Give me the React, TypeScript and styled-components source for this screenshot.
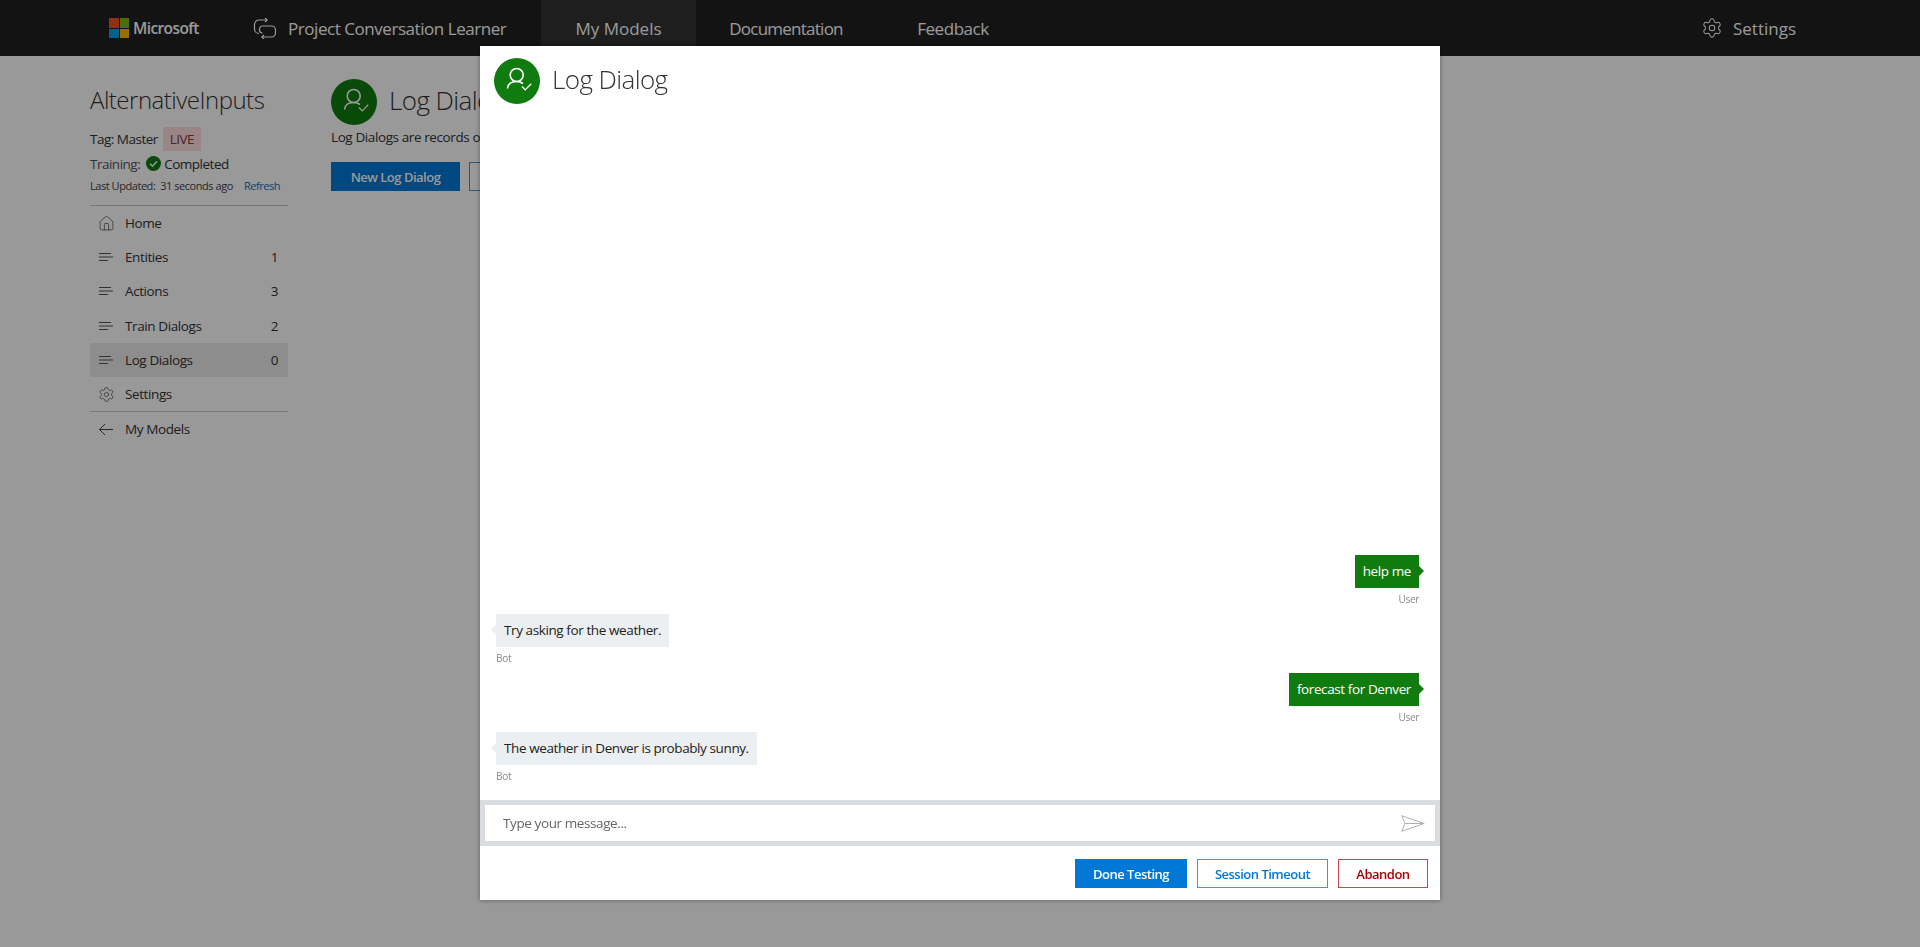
import React from 'react';
import styled, { createGlobalStyle } from 'styled-components';
import { Home, Settings } from 'lucide-react';

const GlobalStyle = createGlobalStyle`
  html, body {
    margin: 0;
    height: 100%;
    background: #fff;
    overflow: hidden;
  }
  body {
    font-family: "Open Sans", "Noto Sans", sans-serif;
    color: #333;
  }
  * { box-sizing: border-box; }
`;

const Page = styled.div`
  width: 1920px;
  height: 947px;
  display: flex;
  flex-direction: column;
`;

/* top navigation */
const TopBar = styled.header`
  height: 56px;
  background: #212121;
  display: flex;
  align-items: stretch;
  padding-left: 109px;
  padding-right: 124px;
  flex-shrink: 0;
`;

const LogoBlock = styled.div`
  display: flex;
  align-items: center;
  gap: 4px;
  width: 144px;
`;

const LogoGrid = styled.div`
  width: 20px;
  height: 20px;
  display: grid;
  grid-template-columns: 1fr 1fr;
  grid-template-rows: 1fr 1fr;
  gap: 1px;
`;

const LogoCell = styled.span<{ $color: string }>`
  background: ${({ $color }) => $color};
`;

const LogoText = styled.span`
  color: #fff;
  font-size: 15.5px;
  font-weight: 600;
  letter-spacing: -0.6px;
`;

const ProductBlock = styled.div`
  display: flex;
  align-items: center;
  gap: 11px;
  color: #fff;
  font-size: 17px;
  letter-spacing: -0.45px;
  width: 288px;
`;

const NavTab = styled.div<{ $active?: boolean; $width: number; $tracking: number }>`
  display: flex;
  align-items: center;
  justify-content: center;
  width: ${({ $width }) => $width}px;
  font-size: 17px;
  letter-spacing: ${({ $tracking }) => $tracking}px;
  color: #fff;
  background: ${({ $active }) => ($active ? '#333' : 'transparent')};
`;

const NavSpacer = styled.div`
  flex: 1;
`;

const NavSettings = styled.div`
  display: flex;
  align-items: center;
  gap: 10px;
  color: #fff;
  font-size: 17px;
`;

/* page behind the dialog */
const Body = styled.div`
  display: flex;
  flex: 1;
  padding-left: 90px;
`;

const Sidebar = styled.aside`
  width: 198px;
  padding-top: 29px;
  flex-shrink: 0;
`;

const AppTitle = styled.div`
  font-size: 24px;
  font-weight: 300;
  line-height: 30px;
  letter-spacing: -0.5px;
  margin-bottom: 12px;
`;

const TagRow = styled.div`
  display: flex;
  align-items: center;
  font-size: 13.5px;
  letter-spacing: -0.5px;
  height: 24px;
  gap: 5px;
`;

const LiveBadge = styled.span`
  background: #ffdede;
  color: #804040;
  width: 38px;
  height: 24px;
  line-height: 24px;
  text-align: center;
`;

const TrainingRow = styled.div`
  display: flex;
  align-items: center;
  font-size: 13.5px;
  letter-spacing: -0.5px;
  height: 25px;
  gap: 6px;
  color: #555;
`;

const TrainingValue = styled.span`
  display: flex;
  align-items: center;
  gap: 3px;
  color: #333;
`;

const UpdatedRow = styled.div`
  display: flex;
  align-items: center;
  font-size: 11px;
  letter-spacing: -0.45px;
  height: 18px;
  color: #444;
  white-space: nowrap;
`;

const RefreshLink = styled.span`
  color: #106ebe;
  margin-left: 11px;
`;

const SideRule = styled.div<{ $top?: number }>`
  height: 1px;
  margin-top: ${({ $top }) => $top || 0}px;
  background: #c8c8c8;
`;

const SideNav = styled.nav`
  display: flex;
  flex-direction: column;
`;

const SideItem = styled.div<{ $selected?: boolean }>`
  height: 34.2px;
  display: flex;
  align-items: center;
  padding: 0 10px 0 8px;
  font-size: 13.5px;
  letter-spacing: -0.4px;
  color: #333;
  background: ${({ $selected }) => ($selected ? '#ececec' : 'transparent')};
`;

const SideIcon = styled.span`
  width: 27px;
  display: flex;
  align-items: center;
`;

const SideLabel = styled.span`
  flex: 1;
`;

const Main = styled.main`
  margin-left: 43px;
  padding-top: 23px;
  flex: 1;
`;

const Heading = styled.div`
  display: flex;
  align-items: center;
  gap: 12px;
  font-size: 26px;
  font-weight: 300;
  letter-spacing: -0.6px;
  color: #333;
  flex-shrink: 0;
`;

const HeadingText = styled.span`
  padding-bottom: 5px;
`;

const DialogHeading = styled(Heading)`
  padding: 12px 14px 0;
`;

const Description = styled.div`
  font-size: 13.5px;
  letter-spacing: -0.4px;
  margin-top: 2px;
  height: 35px;
  line-height: 20px;
`;

const ButtonRow = styled.div<{ $align?: string; $gap: number }>`
  display: flex;
  gap: ${({ $gap }) => $gap}px;
  justify-content: ${({ $align }) => $align || 'flex-start'};
`;

const ActionButton = styled.button<{ $tone: 'primary' | 'outline' | 'danger'; $width: number }>`
  width: ${({ $width }) => $width}px;
  height: 29px;
  padding: 0;
  font-family: inherit;
  font-size: 13px;
  font-weight: 600;
  letter-spacing: -0.5px;
  border: 1px solid ${({ $tone }) => ($tone === 'danger' ? '#c8474d' : $tone === 'outline' ? '#3f96df' : '#0078d7')};
  background: ${({ $tone }) => ($tone === 'primary' ? '#0078d7' : '#fff')};
  color: ${({ $tone }) => ($tone === 'primary' ? '#fff' : $tone === 'danger' ? '#a80000' : '#0078d7')};
`;

/* dialog */
const Overlay = styled.div`
  position: fixed;
  inset: 0;
  background: rgba(0, 0, 0, 0.4);
  padding: 46px 0 0 480px;
`;

const Dialog = styled.div`
  width: 960px;
  height: 854px;
  background: #fff;
  box-shadow: 0 0 5px rgba(0, 0, 0, 0.4);
  display: flex;
  flex-direction: column;
`;

const Badge = styled.span`
  width: 46px;
  height: 46px;
  border-radius: 50%;
  background: #107c10;
  display: flex;
  flex-shrink: 0;
`;

const ChatArea = styled.div`
  flex: 1;
  display: flex;
  flex-direction: column;
  justify-content: flex-end;
  padding: 0 21px 17px 16px;
  gap: 8px;
`;

const Message = styled.div<{ $mine?: boolean }>`
  display: flex;
  flex-direction: column;
  align-items: ${({ $mine }) => ($mine ? 'flex-end' : 'flex-start')};
`;

const Bubble = styled.div<{ $mine?: boolean }>`
  position: relative;
  height: 33px;
  line-height: 32px;
  padding: 0 8px;
  font-size: 13.5px;
  letter-spacing: -0.4px;
  background: ${({ $mine }) => ($mine ? '#107c10' : '#eceff1')};
  color: ${({ $mine }) => ($mine ? '#fff' : '#222')};

  &::after {
    content: '';
    position: absolute;
    top: 11px;
    ${({ $mine }) => ($mine ? 'right: -5px;' : 'left: -5px;')}
    border-top: 5px solid transparent;
    border-bottom: 5px solid transparent;
    ${({ $mine }) => ($mine ? 'border-left: 5px solid #107c10;' : 'border-right: 5px solid #eceff1;')}
  }
`;

const Sender = styled.div`
  font-size: 10px;
  letter-spacing: -0.3px;
  color: #8a8a8a;
  height: 14px;
  line-height: 14px;
  margin-top: 4px;
`;

const InputBand = styled.div`
  height: 46px;
  background: #dadde0;
  padding: 5px;
  flex-shrink: 0;
`;

const InputBox = styled.div`
  height: 36px;
  background: #fff;
  display: flex;
  align-items: center;
  justify-content: space-between;
  padding: 0 10px 0 18px;
  font-size: 13.5px;
  letter-spacing: -0.4px;
  color: #666;
`;

const DialogFooter = styled.div`
  padding: 13px 12px 12px 0;
  flex-shrink: 0;
`;

const ThreeLines = () => (
  <svg width="16" height="10" viewBox="0 0 16 10" fill="none" stroke="#555" strokeWidth="1">
    <path d="M1 1.5h12M1 5h14M1 8.500h9" />
  </svg>
);

const PersonCheck = () => (
  <svg width="46" height="46" viewBox="0 0 46 46" fill="none" stroke="#fff" strokeWidth="1.6">
    <circle cx="22.700" cy="17" r="6.500" />
    <path d="M13.500 30.500C14 26 17.500 23.500 22.500 23.500c2.500 0 4.500.5 6.500 2" />
    <path d="M28 28.500l3.200 3.400 6-6.200" strokeWidth="1.300" />
  </svg>
);

const ChatLoop = () => (
  <svg width="24" height="21" viewBox="0 0 24 21" fill="none" stroke="#fff" strokeWidth="1.2">
    <path d="M14 2H6A4.500 4.500 0 0 0 1.500 6.500v4.500A4.500 4.500 0 0 0 6 15.500" />
    <path d="M12 0l2.200 2-2.200 2" />
    <path d="M9 19h9.500a4 4 0 0 0 4-4v-3a4 4 0 0 0-4-4h-9a3 3 0 0 0-3 3v1a3 3 0 0 0 3 3" />
    <path d="M11 17l-2.200 2 2.200 2" />
  </svg>
);

const SendPlane = () => (
  <svg width="24" height="17" viewBox="0 0 24 17" fill="none" stroke="#b0b0b0" strokeWidth="1">
    <path d="M.700.700l22.500 7.800-22.500 7.800 3.300-7.800z" />
    <path d="M4 8.500h19" />
  </svg>
);

const BackArrow = () => (
  <svg width="16" height="13" viewBox="0 0 16 13" fill="none" stroke="#444" strokeWidth="1">
    <path d="M15 6.500H1.500M7 1L1.500 6.500 7 12" />
  </svg>
);

const CompletedMark = () => (
  <svg width="15" height="15" viewBox="0 0 15 15">
    <circle cx="7.500" cy="7.500" r="7.500" fill="#107c10" />
    <path d="M4 7.800l2.500 2.400L11 5.300" fill="none" stroke="#fff" strokeWidth="1.500" />
  </svg>
);

const sideItems = [
  { label: 'Entities', count: 1 },
  { label: 'Actions', count: 3 },
  { label: 'Train Dialogs', count: 2 },
  { label: 'Log Dialogs', count: 0, selected: true },
];

const messages = [
  { text: 'help me', mine: true },
  { text: 'Try asking for the weather.' },
  { text: 'forecast for Denver', mine: true },
  { text: 'The weather in Denver is probably sunny.' },
];

const App: React.FC = () => {
  return (
    <>
      <GlobalStyle />
      <Page>
        <TopBar>
          <LogoBlock>
            <LogoGrid>
              <LogoCell $color="#f25022" />
              <LogoCell $color="#7fba00" />
              <LogoCell $color="#00a4ef" />
              <LogoCell $color="#ffb900" />
            </LogoGrid>
            <LogoText>Microsoft</LogoText>
          </LogoBlock>
          <ProductBlock>
            <ChatLoop />
            Project Conversation Learner
          </ProductBlock>
          <NavTab $active $width={155} $tracking={0}>My Models</NavTab>
          <NavTab $width={180} $tracking={-0.75}>Documentation</NavTab>
          <NavTab $width={154} $tracking={-0.45}>Feedback</NavTab>
          <NavSpacer />
          <NavSettings>
            <Settings size={22} strokeWidth={1.1} color="#fff" />
            Settings
          </NavSettings>
        </TopBar>
        <Body>
          <Sidebar>
            <AppTitle>AlternativeInputs</AppTitle>
            <TagRow>
              Tag: Master
              <LiveBadge>LIVE</LiveBadge>
            </TagRow>
            <TrainingRow>
              Training:
              <TrainingValue>
                <CompletedMark />
                Completed
              </TrainingValue>
            </TrainingRow>
            <UpdatedRow>
              Last Updated:&nbsp; 31 seconds ago
              <RefreshLink>Refresh</RefreshLink>
            </UpdatedRow>
            <SideRule $top={11} />
            <SideNav>
              <SideItem>
                <SideIcon><Home size={17} strokeWidth={1} color="#444" /></SideIcon>
                <SideLabel>Home</SideLabel>
              </SideItem>
              {sideItems.map((item) => (
                <SideItem key={item.label} $selected={item.selected}>
                  <SideIcon><ThreeLines /></SideIcon>
                  <SideLabel>{item.label}</SideLabel>
                  {item.count}
                </SideItem>
              ))}
              <SideItem>
                <SideIcon><Settings size={17} strokeWidth={1} color="#444" /></SideIcon>
                <SideLabel>Settings</SideLabel>
              </SideItem>
            </SideNav>
            <SideRule />
            <SideItem>
              <SideIcon><BackArrow /></SideIcon>
              <SideLabel>My Models</SideLabel>
            </SideItem>
          </Sidebar>
          <Main>
            <Heading>
              <Badge><PersonCheck /></Badge>
              <HeadingText>Log Dialogs</HeadingText>
            </Heading>
            <Description>Log Dialogs are records of conversations</Description>
            <ButtonRow $gap={9}>
              <ActionButton $tone="primary" $width={129}>New Log Dialog</ActionButton>
              <ActionButton $tone="outline" $width={129}>Import</ActionButton>
            </ButtonRow>
          </Main>
        </Body>
        <Overlay>
          <Dialog>
            <DialogHeading>
              <Badge><PersonCheck /></Badge>
              <HeadingText>Log Dialog</HeadingText>
            </DialogHeading>
            <ChatArea>
              {messages.map((m) => (
                <Message key={m.text} $mine={m.mine}>
                  <Bubble $mine={m.mine}>{m.text}</Bubble>
                  <Sender>{m.mine ? 'User' : 'Bot'}</Sender>
                </Message>
              ))}
            </ChatArea>
            <InputBand>
              <InputBox>
                Type your message...
                <SendPlane />
              </InputBox>
            </InputBand>
            <DialogFooter>
              <ButtonRow $align="flex-end" $gap={10}>
                <ActionButton $tone="primary" $width={112}>Done Testing</ActionButton>
                <ActionButton $tone="outline" $width={131}>Session Timeout</ActionButton>
                <ActionButton $tone="danger" $width={90}>Abandon</ActionButton>
              </ButtonRow>
            </DialogFooter>
          </Dialog>
        </Overlay>
      </Page>
    </>
  );
};

export default App;
